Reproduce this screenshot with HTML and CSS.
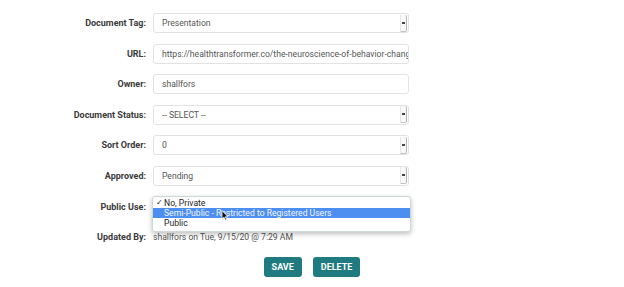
FILE: index.html
```html
<!DOCTYPE html>
<html lang="en">
<head>
    <meta charset="UTF-8">
    <meta name="viewport" content="width=device-width, initial-scale=1.0">
    <title>Edit Document</title>
    <link rel="stylesheet" href="styles.css">
</head>
<body>

<div class="form">
    <label class="label">Document Tag:</label>
    <div class="field select"><span class="value">Presentation</span><span class="arrow"></span></div>

    <label class="label">URL:</label>
    <div class="field"><span class="value">https://healthtransformer.co/the-neuroscience-of-behavior-change</span></div>

    <label class="label">Owner:</label>
    <div class="field"><span class="value">shallfors</span></div>

    <label class="label">Document Status:</label>
    <div class="field select"><span class="value">-- SELECT --</span><span class="arrow"></span></div>

    <label class="label">Sort Order:</label>
    <div class="field select"><span class="value">0</span><span class="arrow"></span></div>

    <label class="label">Approved:</label>
    <div class="field select"><span class="value">Pending</span><span class="arrow"></span></div>

    <label class="label label-mid">Public Use:</label>
    <div class="field select open">
        <span class="value">No, Private</span><span class="arrow"></span>
        <ul class="menu">
            <li class="option checked">No, Private</li>
            <li class="option active">Semi-Public - Restricted to Registered Users
                <svg class="cursor" width="8" height="11" viewBox="0 0 8 11"><path d="M1 0.5 L1 9 L3 7.2 L4.4 10.2 L5.6 9.6 L4.3 6.8 L7 6.8 Z" fill="#111" stroke="#fff" stroke-width="0.8"/></svg>
            </li>
            <li class="option">Public</li>
        </ul>
    </div>

    <label class="label">Updated By:</label>
    <div class="text">shallfors on Tue, 9/15/20 @ 7:29 AM</div>
</div>

<div class="actions">
    <button class="btn">SAVE</button>
    <button class="btn">DELETE</button>
</div>

</body>
</html>
```

FILE: styles.css
```css
body {
    margin: 0;
    font-family: 'Roboto', 'Liberation Sans', sans-serif;
    background-color: #fff;
    color: #555;
}
.form {
    display: grid;
    grid-template-columns: 138px 256px;
    grid-auto-rows: 20px;
    column-gap: 7px;
    row-gap: 10.5px;
    padding: 13px 0 0 8px;
}
.label {
    display: flex;
    align-items: center;
    justify-content: flex-end;
    font-size: 9px;
    font-weight: bold;
    color: #3a3a3a;
}
.label-mid {
    padding-top: 2px;
}
.field {
    position: relative;
    display: flex;
    align-items: center;
    border: 1px solid #e2e2e2;
    border-radius: 3px;
    font-size: 8.6px;
    color: #555;
    overflow: hidden;
}
.field .value {
    flex: 1;
    padding-left: 8px;
    white-space: nowrap;
    overflow: hidden;
}
.select .arrow {
    position: relative;
    width: 5px;
    height: 16px;
    margin-right: 1px;
    border-left: 1px solid #e6e6e6;
    border-right: 1px solid #b4b4b4;
    border-bottom: 1px solid #c4c4c4;
    border-radius: 0 2px 2px 0;
    background-color: #f8f8f8;
}
.select .arrow::after {
    content: '';
    position: absolute;
    left: 1px;
    top: 7px;
    width: 3px;
    height: 2px;
    background-color: #444;
}
.open {
    overflow: visible;
}
.menu {
    position: absolute;
    left: -2px;
    top: -1px;
    width: 257px;
    margin: 0;
    padding: 1px 0 3px;
    list-style: none;
    background-color: #fff;
    border: 1px solid #cfd8d8;
    border-radius: 3px;
    box-shadow: 0 2px 5px rgba(0, 0, 0, 0.25);
    font-family: 'Roboto', 'Liberation Sans', sans-serif;
    font-size: 8.6px;
    color: #222;
    z-index: 2;
}
.option {
    position: relative;
    height: 10px;
    line-height: 10px;
    padding-left: 11px;
}
.option.checked::before {
    content: '\2713';
    position: absolute;
    left: 3px;
    font-size: 8px;
}
.option.active {
    background-color: #4d8ff0;
    color: #f2f6ff;
}
.cursor {
    position: absolute;
    left: 68px;
    top: 2px;
}
.text {
    display: flex;
    align-items: center;
    font-size: 8.6px;
    color: #555;
}
.actions {
    display: flex;
    justify-content: center;
    gap: 11px;
    margin-top: 10px;
}
.btn {
    height: 20px;
    padding: 0 8px;
    font-family: 'Roboto', 'Liberation Sans', sans-serif;
    font-size: 9px;
    font-weight: bold;
    color: #fff;
    background-color: #1f7b80;
    border: none;
    border-radius: 3px;
}
```
